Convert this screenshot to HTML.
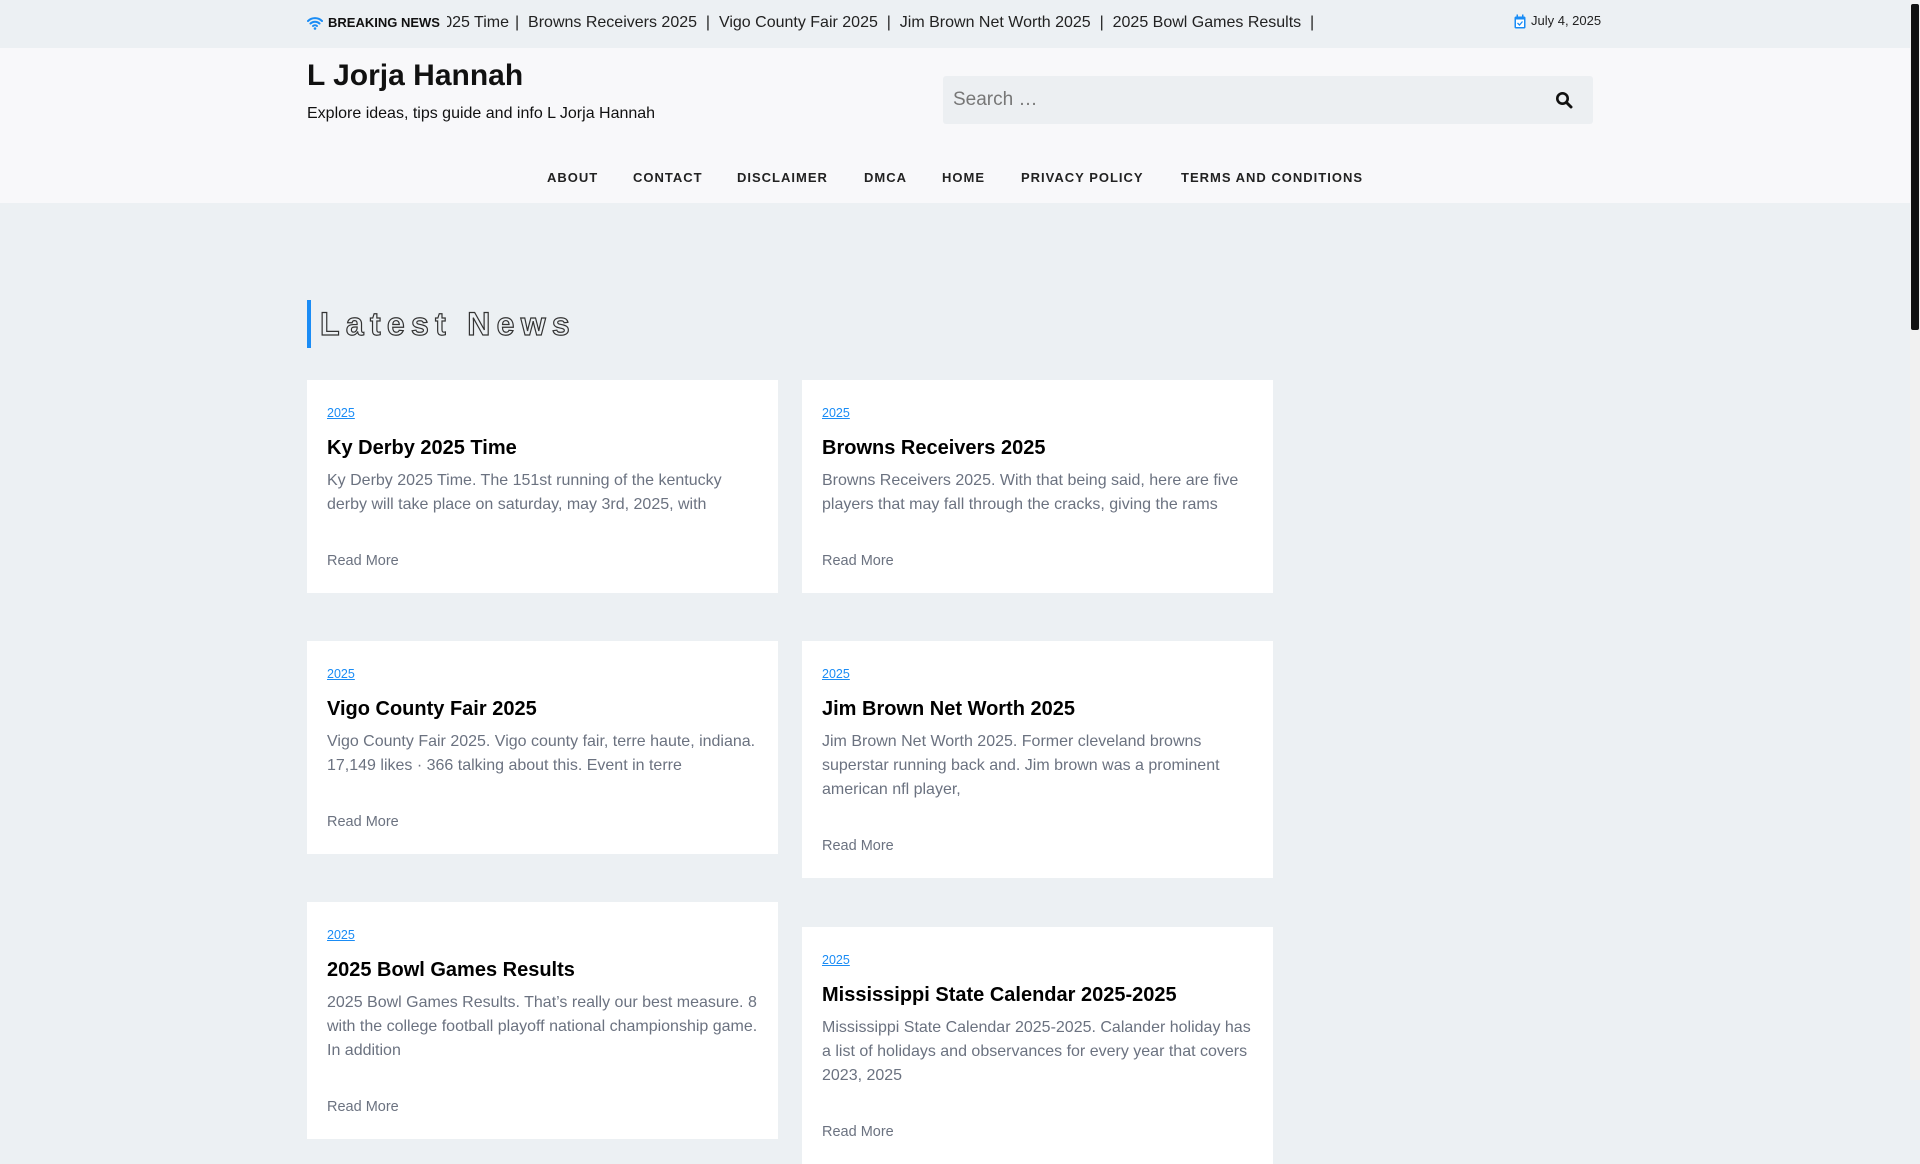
<!DOCTYPE html>
<html><head><meta charset="utf-8"><style>
*{margin:0;padding:0;box-sizing:border-box}
body{width:1920px;height:1080px;overflow:hidden;background:#ecf0f3;font-family:"Liberation Sans",Arial,sans-serif;position:relative}
.abs{position:absolute}
.top{left:0;top:0;width:1910px;height:48px;background:#ecf0f3}
.hdr{left:0;top:48px;width:1910px;height:155px;background:#f8f8fa}
.sb{right:0;top:0;width:10px;height:1080px;background:#f1f1f1}
.sb i{position:absolute;left:1px;top:4px;width:8px;height:326px;background:#111;border-radius:2px}
.tick{left:447px;top:0;width:880px;height:48px;overflow:hidden;font-size:16px;color:#222;line-height:46px;white-space:pre}
.nav{top:168px;font-size:13px;font-weight:bold;letter-spacing:1px;color:#222;line-height:20px}
.card{background:#fff;width:471px;padding:23px 20px 20px 20px}
.card .cat{font-size:12.5px;color:#1a8cf5;text-decoration:underline;line-height:20px;display:block}
.card h2{font-size:20px;font-weight:bold;color:#000;margin-top:10px;line-height:30px}
.card p{font-size:16px;color:#6b7280;line-height:24px;margin-top:6px}
.card .rm{font-size:14.5px;color:#6b7280;line-height:24px;margin-top:32px;display:block}
</style></head><body>
<div class="abs top"></div>
<div class="abs hdr"></div>
<div class="abs sb"><i></i></div>
<svg class="abs" style="left:307px;top:16px" width="16" height="14" viewBox="0 0 16 14"><path d="M1 5a10 10 0 0 1 14 0M3.5 7.5a6.5 6.5 0 0 1 9 0M6 10a3 3 0 0 1 4 0" stroke="#1a8cf5" stroke-width="2" fill="none" stroke-linecap="round"/><circle cx="8" cy="12.5" r="1.3" fill="#1a8cf5"/></svg>
<div class="abs" style="left:328px;top:14px;font-size:13px;font-weight:bold;color:#111;line-height:18px">BREAKING NEWS</div>
<div class="abs tick"><span class="abs" style="right:calc(880px - 62px);top:0">Ky Derby 2025 Time</span><span class="abs" style="left:68px;top:0">|  Browns Receivers 2025  |  Vigo County Fair 2025  |  Jim Brown Net Worth 2025  |  2025 Bowl Games Results  |</span></div>
<svg class="abs" style="left:1514px;top:14px" width="12" height="15" viewBox="0 0 12 15"><rect x="0.5" y="2.5" width="11" height="12" rx="1.5" fill="#1a8cf5"/><rect x="2" y="5.5" width="8" height="7.5" fill="#fff"/><rect x="2.5" y="0.5" width="1.5" height="3" fill="#1a8cf5"/><rect x="8" y="0.5" width="1.5" height="3" fill="#1a8cf5"/><path d="M3.5 9l2 2 3-3.5" stroke="#1a8cf5" stroke-width="1.3" fill="none"/></svg>
<div class="abs" style="left:1531px;top:13px;font-size:13px;color:#222;line-height:16px">July 4, 2025</div>
<div class="abs" style="left:307px;top:57px;font-size:30px;font-weight:bold;color:#111;line-height:38px">L Jorja Hannah</div>
<div class="abs" style="left:307px;top:104px;font-size:16px;color:#111;line-height:20px">Explore ideas, tips guide and info L Jorja Hannah</div>
<div class="abs" style="left:943px;top:76px;width:650px;height:48px;background:#eceff2;border-radius:3px"></div>
<div class="abs" style="left:953px;top:88px;font-size:19px;color:#777;line-height:24px">Search …</div>
<svg class="abs" style="left:1555px;top:91px" width="18" height="18" viewBox="0 0 18 18"><circle cx="7.5" cy="7.5" r="5.2" stroke="#111" stroke-width="2.6" fill="none"/><path d="M11.5 11.5l4.5 4.5" stroke="#111" stroke-width="3" stroke-linecap="round"/></svg>
<div class="abs nav" style="left:547px">ABOUT</div>
<div class="abs nav" style="left:633px">CONTACT</div>
<div class="abs nav" style="left:737px">DISCLAIMER</div>
<div class="abs nav" style="left:864px">DMCA</div>
<div class="abs nav" style="left:942px">HOME</div>
<div class="abs nav" style="left:1021px">PRIVACY POLICY</div>
<div class="abs nav" style="left:1181px">TERMS AND CONDITIONS</div>
<div class="abs" style="left:307px;top:300px;width:4px;height:48px;background:#1a8cf5"></div>
<div class="abs" style="left:320px;top:303px;font-size:32px;font-weight:bold;letter-spacing:6.3px;color:transparent;-webkit-text-stroke:1.2px #333;line-height:42px">Latest News</div>

<div class="abs card" style="left:307px;top:380px"><span class="cat">2025</span><h2>Ky Derby 2025 Time</h2><p>Ky Derby 2025 Time. The 151st running of the kentucky derby will take place on saturday, may 3rd, 2025, with</p><span class="rm">Read More</span></div>
<div class="abs card" style="left:802px;top:380px"><span class="cat">2025</span><h2>Browns Receivers 2025</h2><p>Browns Receivers 2025. With that being said, here are five players that may fall through the cracks, giving the rams</p><span class="rm">Read More</span></div>
<div class="abs card" style="left:307px;top:641px"><span class="cat">2025</span><h2>Vigo County Fair 2025</h2><p>Vigo County Fair 2025. Vigo county fair, terre haute, indiana. 17,149 likes · 366 talking about this. Event in terre</p><span class="rm">Read More</span></div>
<div class="abs card" style="left:802px;top:641px"><span class="cat">2025</span><h2>Jim Brown Net Worth 2025</h2><p>Jim Brown Net Worth 2025. Former cleveland browns superstar running back and. Jim brown was a prominent american nfl player,</p><span class="rm">Read More</span></div>
<div class="abs card" style="left:307px;top:902px"><span class="cat">2025</span><h2>2025 Bowl Games Results</h2><p>2025 Bowl Games Results. That’s really our best measure. 8 with the college football playoff national championship game. In addition</p><span class="rm">Read More</span></div>
<div class="abs card" style="left:802px;top:927px"><span class="cat">2025</span><h2>Mississippi State Calendar 2025-2025</h2><p>Mississippi State Calendar 2025-2025. Calander holiday has a list of holidays and observances for every year that covers 2023, 2025</p><span class="rm">Read More</span></div>
</body></html>
